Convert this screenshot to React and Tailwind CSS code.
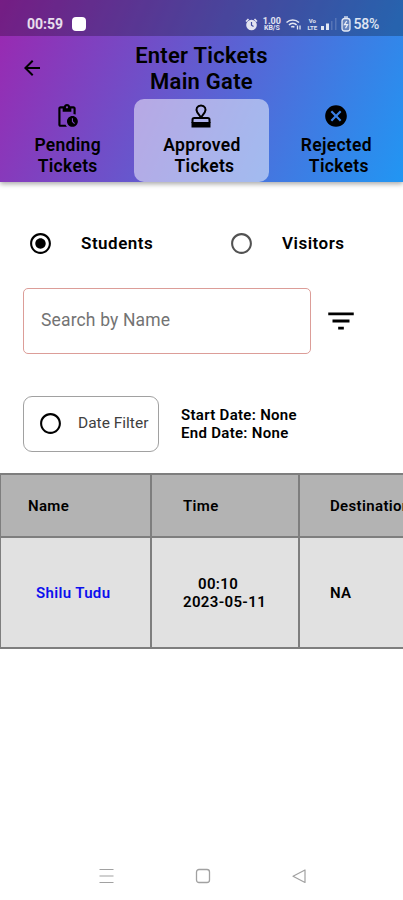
import { useState } from 'react'
import {
  MdArrowBack,
  MdCancel,
  MdFilterList,
  MdPendingActions,
  MdRadioButtonChecked,
  MdRadioButtonUnchecked,
} from 'react-icons/md'

function StampIcon({ size, className }) {
  return (
    <svg width={size} height={size} viewBox="0 0 26 26" fill="none" stroke="currentColor" strokeWidth="2" className={className}>
      <path d="M13 14.500 9.300 9.400C7.200 6 9.300 2.400 13 2.400s5.800 3.600 3.700 7L13 14.500z" strokeLinejoin="round" />
      <path d="M4.500 20v-3.300c0-1 .7-1.700 1.700-1.700h13.600c1 0 1.700.7 1.700 1.700V20" />
      <path d="M3.500 19h19v5.500h-19z" fill="currentColor" stroke="none" />
    </svg>
  )
}

const tabs = [
  { id: 'pending', label: 'Pending', icon: MdPendingActions },
  { id: 'approved', label: 'Approved', icon: StampIcon, indent: 'pl-[5px]' },
  { id: 'rejected', label: 'Rejected', icon: MdCancel, indent: 'pl-[5px]' },
]

const tickets = [
  { name: 'Shilu Tudu', time: '00:10', date: '2023-05-11', destination: 'NA' },
]

function StatusBar() {
  return (
    <div className="h-9 bg-black/25 pt-[11px] pl-[27px] pr-6 flex items-start justify-between text-white/85">
      <div className="flex items-center gap-[9px] h-[26px]">
        <span className="text-[14px] font-bold leading-none">00:59</span>
        <span className="w-[14px] h-[14px] rounded-[4px] bg-white" />
      </div>
      <div className="flex items-center h-[26px]">
        <svg width="13" height="13" viewBox="0 0 13 13" className="mr-[4px]">
          <circle cx="6.500" cy="7" r="5.300" fill="currentColor" />
          <path d="M1 3.500 3.500 1M12 3.500 9.500 1" stroke="currentColor" strokeWidth="1.600" />
          <path d="M6.500 4v3.200l2 1.300" fill="none" stroke="#3f4ca0" strokeWidth="1.200" />
        </svg>
        <div className="w-[19px] mr-[5px] flex flex-col items-center font-bold">
          <span className="text-[9px] leading-[8px]">1.00</span>
          <span className="text-[7px] leading-[7px]">KB/S</span>
        </div>
        <svg width="16" height="12" viewBox="0 0 16 12" fill="none" stroke="currentColor" strokeWidth="1.500" className="mr-[5px]">
          <path d="M.5 4.500C4 1 9.500 1 13 4.500M3 7c2-2.400 5.600-2.400 7.600 0M5.300 9.300c1-1.200 2.200-1.200 3 0" />
          <path d="M11.500 7.500v4M14 7.500v4" strokeWidth="1.300" />
        </svg>
        <div className="w-[10px] mr-[4px] flex flex-col items-center text-[6px] leading-[7px] font-bold">
          <span>Vo</span>
          <span>LTE</span>
        </div>
        <svg width="16" height="12" viewBox="0 0 16 12" fill="currentColor" className="mr-[4px]">
          <rect x="0" y="8" width="3" height="4" />
          <rect x="5" y="5.500" width="3" height="6.500" />
          <rect x="10" y="3" width="1.500" height="9" opacity="0.200" />
          <rect x="14" y="0" width="1.500" height="12" opacity="0.200" />
        </svg>
        <svg width="10" height="16" viewBox="0 0 10 16" fill="none" stroke="currentColor" strokeWidth="1.300" className="mr-[2px]">
          <path d="M3 1h4" />
          <rect x="1" y="2.500" width="8" height="12.500" rx="2.500" fill="currentColor" fillOpacity="0.300" />
          <path d="M5.700 5 3.500 8.700h3L4.500 12.300" />
        </svg>
        <span className="text-[14px] leading-none font-medium tracking-[-0.2px]">58%</span>
      </div>
    </div>
  )
}

function Radio({ label, checked, onClick }) {
  return (
    <button onClick={onClick} className="w-[201px] shrink-0 flex items-center gap-[28px] text-[17px] font-semibold tracking-[0.5px]">
      {checked
        ? <MdRadioButtonChecked size={25} />
        : <MdRadioButtonUnchecked size={25} className="text-neutral-600" />}
      {label}
    </button>
  )
}

export default function App() {
  const [tab, setTab] = useState('approved')
  const [kind, setKind] = useState('students')
  const [search, setSearch] = useState('')

  return (
    <div className="w-[403px] h-[900px] overflow-hidden bg-white flex flex-col font-['Roboto',sans-serif] text-black">

      {/* HEADER */}
      <header className="h-[182px] shrink-0 bg-[linear-gradient(114deg,#9c27b0,#2196f3)] shadow-[0_2px_5px_rgba(0,0,0,0.35)] flex flex-col">
        <StatusBar />
        <div className="h-[62px] px-5 pt-[7px] flex items-start justify-between">
          <button className="mt-[13px]"><MdArrowBack size={24} /></button>
          <h1 className="text-[22px] leading-[26px] font-semibold text-center tracking-[0.25px]">
            Enter Tickets<br />Main Gate
          </h1>
          <span className="w-6" />
        </div>
        <nav className="pt-px grid grid-cols-3">
          {tabs.map(({ id, label, icon: Icon, indent }) => (
            <button
              key={id}
              onClick={() => setTab(id)}
              className={`h-[83px] pt-[4px] rounded-[10px] flex flex-col items-center text-[17.5px] leading-[21px] font-semibold tracking-[0.3px] ${tab === id ? 'bg-white/50' : ''}`}
            >
              <Icon size={26} className="mb-[6px] shrink-0" />
              <span className="pl-px">{label}<br /><span className={indent}>Tickets</span></span>
            </button>
          ))}
        </nav>
      </header>

      {/* FILTERS */}
      <div className="h-[291px] shrink-0 pl-[23px]">
        <div className="pt-[49px] pl-[5px] flex">
          <Radio label="Students" checked={kind === 'students'} onClick={() => setKind('students')} />
          <Radio label="Visitors" checked={kind === 'visitors'} onClick={() => setKind('visitors')} />
        </div>

        <div className="mt-[31px] flex items-center">
          <input
            value={search}
            onChange={e => setSearch(e.target.value)}
            placeholder="Search by Name"
            className="w-[288px] h-[66px] px-[17px] pb-px rounded-[5px] border border-[#dc9d98] text-[17.5px] tracking-[0.15px] placeholder:text-neutral-500 outline-none"
          />
          <MdFilterList size={34} className="ml-[13px]" />
        </div>

        <div className="mt-[42px] flex items-center">
          <button className="w-[136px] h-[56px] pl-[14px] rounded-[9px] border border-neutral-400 flex items-center gap-[15px] text-[15.5px] text-neutral-700 whitespace-nowrap">
            <MdRadioButtonUnchecked size={25} className="shrink-0 text-black" />
            <span className="pt-px">Date Filter</span>
          </button>
          <p className="ml-[22px] text-[15px] leading-[18px] font-semibold tracking-[0.3px]">
            Start Date: None<br />End Date: None
          </p>
        </div>
      </div>

      {/* TABLE */}
      <div className="-ml-px shrink-0 overflow-hidden">
        <table className="w-[460px] table-fixed border-collapse text-[15px] leading-[18px] font-semibold tracking-[0.35px] text-left">
          <thead className="bg-[#b3b3b3]">
            <tr className="h-[63px]">
              <th className="w-[151px] border-2 border-[#7e7e7e] pl-[27px] font-semibold">Name</th>
              <th className="w-[148px] border-2 border-[#7e7e7e] pl-[31px] font-semibold">Time</th>
              <th className="border-2 border-[#7e7e7e] pl-[30px] font-semibold">Destination</th>
            </tr>
          </thead>
          <tbody className="bg-[#e1e1e1]">
            {tickets.map(t => (
              <tr key={t.name} className="h-[111px]">
                <td className="border-2 border-[#7e7e7e] pl-[35px] text-[#0c10ee]">{t.name}</td>
                <td className="border-2 border-[#7e7e7e] pl-[31px]">
                  <span className="pl-[15px]">{t.time}</span><br />{t.date}
                </td>
                <td className="border-2 border-[#7e7e7e] pl-[30px]">{t.destination}</td>
              </tr>
            ))}
          </tbody>
        </table>
      </div>

      {/* SYSTEM NAVIGATION */}
      <div className="mt-auto h-[48px] pl-[98px] pr-[96px] flex items-center justify-between text-neutral-400">
        <svg width="16" height="16" viewBox="0 0 16 16" fill="none" stroke="currentColor" strokeWidth="1.200">
          <path d="M1.500 1.500h14M1.500 8h14M1.500 14.500h14" />
        </svg>
        <svg width="16" height="16" viewBox="0 0 16 16" fill="none" stroke="currentColor" strokeWidth="1.300">
          <rect x="1.500" y="1.500" width="13" height="13" rx="2.500" />
        </svg>
        <svg width="16" height="16" viewBox="0 0 16 16" fill="none" stroke="currentColor" strokeWidth="1.200" strokeLinejoin="round">
          <path d="M14 2v12.500L2 8.200z" />
        </svg>
      </div>
    </div>
  )
}
